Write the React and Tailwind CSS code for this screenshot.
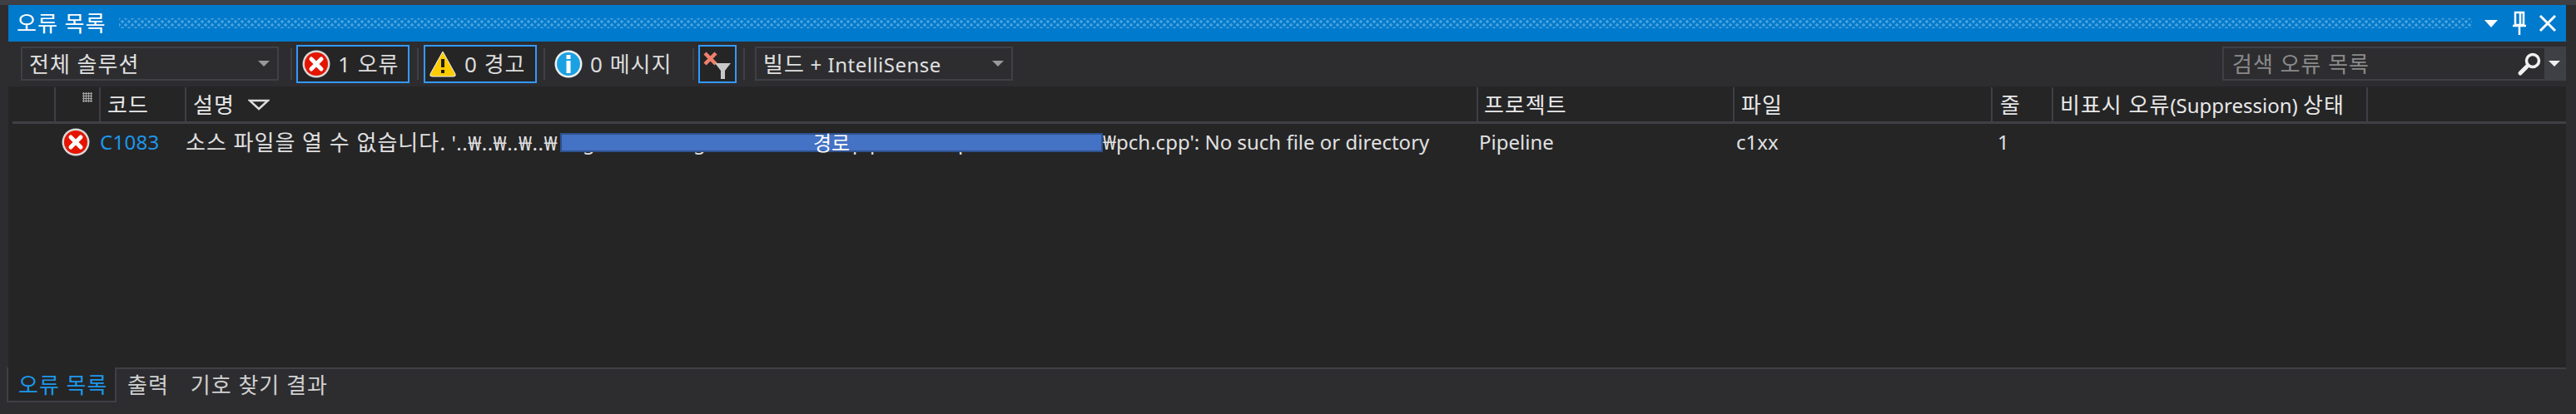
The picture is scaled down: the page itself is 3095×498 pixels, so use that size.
const FONT = "font-['Noto_Sans','Noto_Sans_CJK_KR',sans-serif]";

// hangul runs wider than the latin text in the original font
function Ko({ children }) {
  return <span className="text-[26px] tracking-[1px]">{children}</span>;
}

function ErrorIcon({ size = 34 }) {
  return (
    <svg viewBox="0 0 34 34" width={size} height={size} className="shrink-0">
      <circle cx="17" cy="17" r="16.500" fill="#d8d8d8" />
      <circle cx="17" cy="17" r="14" fill="#e51400" />
      <path d="M11 11L23 23M23 11L11 23" stroke="#fff" strokeWidth="5" strokeLinecap="round" />
    </svg>
  );
}

function WarningIcon() {
  return (
    <svg viewBox="0 0 34 34" width="34" height="34" className="shrink-0">
      <path d="M17 2L32 29Q33 32 30 32H4Q1 32 2 29Z" fill="#ffcc00" stroke="#f2f2f2" strokeWidth="1" />
      <path d="M17 11V21" stroke="#1e1e1e" strokeWidth="4" />
      <rect x="15" y="24" width="4" height="4" fill="#1e1e1e" />
    </svg>
  );
}

function InfoIcon() {
  return (
    <svg viewBox="0 0 34 34" width="34" height="34" className="shrink-0">
      <circle cx="17" cy="17" r="16.500" fill="#f0f0f0" />
      <circle cx="17" cy="17" r="14" fill="#1ba1e2" />
      <rect x="14.500" y="6" width="5" height="5" fill="#fff" />
      <rect x="14.500" y="13" width="5" height="15" fill="#fff" />
    </svg>
  );
}

function FilterIcon() {
  return (
    <svg viewBox="0 0 36 36" width="36" height="36">
      <path d="M3 5L16 18M16 5L3 18" stroke="#f0806c" strokeWidth="4.500" />
      <path d="M15 17H34L27 26V36H22V26Z" fill="#c8c8c8" />
    </svg>
  );
}

function Caret({ className = "" }) {
  return <span className={`w-0 h-0 border-x-[7px] border-x-transparent border-t-[7px] ${className}`} />;
}

function Combo({ children, className }) {
  return (
    <div className={`h-[41px] flex items-center justify-between pl-[8px] pr-[9px] bg-[#2d2d30] border-2 border-[#3f3f46] text-[#e0e0e0] ${className}`}>
      <span>{children}</span>
      <Caret className="border-t-[#999999]" />
    </div>
  );
}

function Sep({ className }) {
  return <div className={`w-[2px] h-[38px] bg-[#3f3f46] ${className}`} />;
}

function ToggleButton({ children, className }) {
  return (
    <div className={`h-[46px] flex items-center border-2 border-[#3399ff] bg-[#252526] ${className}`}>
      {children}
    </div>
  );
}

function HeaderCell({ children, className }) {
  return (
    <div className={`h-full flex items-center border-r-2 border-[#3f3f46] text-[#e8e8e8] ${className}`}>
      {children}
    </div>
  );
}

// bits of the masked path that stick out above and below the blue box
const PEEKS = [
  { w: "w-[27px]", t: "" },
  { w: "w-[118px]", t: "g" },
  { w: "w-[15px]", t: "l" },
  { w: "w-[191px]", t: "g" },
  { w: "w-[21px]", t: "p" },
  { w: "w-[26px]", t: "p" },
  { w: "w-[80px]", t: "l" },
  { w: "w-[20px]", t: "p" },
];

export default function App() {
  return (
    <div className={`w-[3095px] h-[498px] bg-[#2d2d30] flex flex-col overflow-hidden text-[24px] leading-none ${FONT}`}>
      <div className="h-[6px] bg-[#3f3f46] shrink-0" />

      {/* title bar */}
      <div className="h-[44px] ml-[10px] mr-[12px] bg-[#007acc] flex items-center pl-[10px] text-white shrink-0">
        <span className="w-[123px] whitespace-nowrap"><Ko>오류 목록</Ko></span>
        <div className="w-[2827px] h-[12px] bg-[radial-gradient(circle,#47a0dc_1.500px,transparent_2px),radial-gradient(circle,#47a0dc_1.500px,transparent_2px)] bg-size-[8px_8px] bg-position-[0_0,4px_4px]" />
        <Caret className="ml-[15px] border-x-[8px] border-t-[9px] border-t-white" />
        <svg viewBox="0 0 18 30" width="18" height="30" className="ml-[17px]" fill="none" stroke="#fff" strokeWidth="2.500">
          <path d="M4 2H14V17H4ZM10 3V16M1 18H17M9 18V29" />
        </svg>
        <svg viewBox="0 0 22 22" width="22" height="22" className="ml-[14px]" fill="none" stroke="#fff" strokeWidth="3">
          <path d="M2 2L20 20M20 2L2 20" />
        </svg>
      </div>

      {/* toolbar */}
      <div className="h-[50px] flex items-center pl-[25px] pr-[12px] pt-[3px] shrink-0">
        <Combo className="w-[310px]"><Ko>전체 솔루션</Ko></Combo>
        <Sep className="ml-[14px]" />
        <ToggleButton className="w-[136px] ml-[5px] pl-[5px] gap-[9px] text-[#dcdcdc]">
          <ErrorIcon />
          <Ko>1 오류</Ko>
        </ToggleButton>
        <Sep className="ml-[9px]" />
        <ToggleButton className="w-[136px] ml-[6px] pl-[4px] gap-[9px] text-[#dcdcdc]">
          <WarningIcon />
          <Ko>0 경고</Ko>
        </ToggleButton>
        <Sep className="ml-[8px]" />
        <div className="ml-[11px] w-[166px] flex items-center gap-[9px] text-[#dcdcdc]">
          <InfoIcon />
          <Ko>0 메시지</Ko>
        </div>
        <Sep />
        <ToggleButton className="w-[46px] ml-[5px] justify-center">
          <FilterIcon />
        </ToggleButton>
        <Sep className="ml-[8px]" />
        <Combo className="w-[310px] ml-[12px]"><Ko>빌드</Ko><span className="tracking-[0.5px]"> + IntelliSense</span></Combo>
        <div className="ml-auto w-[413px] h-[41px] flex border-2 border-[#3f3f46] bg-[#3f3f46]">
          <div className="flex-1 bg-[#2d2d30] flex items-center justify-between pl-[10px] pr-[3px] text-[#8a8a8a]">
            <Ko>검색 오류 목록</Ko>
            <svg viewBox="0 0 30 30" width="30" height="30" fill="none" stroke="#f0f0f0">
              <circle cx="19" cy="11" r="7.500" strokeWidth="3.500" />
              <path d="M13 17L4 26" strokeWidth="5" strokeLinecap="round" />
            </svg>
          </div>
          <div className="w-[24px] flex items-center justify-center">
            <Caret className="border-x-[6px] border-t-[6px] border-t-[#f0f0f0]" />
          </div>
        </div>
      </div>

      {/* table */}
      <div className="flex-1 ml-[10px] mr-[12px] bg-[#252526] flex flex-col min-h-0 border-b-2 border-[#3f3f46]">
        <div className="h-[4px] bg-[#2d2d30] shrink-0" />
        <div className="h-[42px] flex items-center shrink-0 pt-[1px] ml-[5px]">
          <div className="w-[52px] h-full border-r-2 border-[#3f3f46]" />
          <div className="w-[54px] h-full border-r-2 border-[#3f3f46] relative">
            <div className="absolute left-[32px] top-[6px] w-[12px] h-[12px] bg-[radial-gradient(circle,#a0a0a0_1px,transparent_1.500px)] bg-size-[3px_3px]" />
          </div>
          <HeaderCell className="w-[103px] pl-[8px]"><Ko>코드</Ko></HeaderCell>
          <HeaderCell className="w-[1552px] pl-[8px]">
            <Ko>설명</Ko>
            <svg viewBox="0 0 26 14" width="26" height="14" className="ml-[16px]" fill="none" stroke="#dcdcdc" strokeWidth="2.500">
              <path d="M2 2H24L13 12Z" />
            </svg>
          </HeaderCell>
          <HeaderCell className="w-[308px] pl-[7px]"><Ko>프로젝트</Ko></HeaderCell>
          <HeaderCell className="w-[310px] pl-[8px]"><Ko>파일</Ko></HeaderCell>
          <HeaderCell className="w-[73px] pl-[9px]"><Ko>줄</Ko></HeaderCell>
          <HeaderCell className="w-[378px] pl-[8px]">
            <span className="whitespace-nowrap"><Ko>비표시 오류</Ko>(Suppression) <Ko>상태</Ko></span>
          </HeaderCell>
        </div>
        <div className="h-[3px] bg-[#3f3f46] ml-[5px] shrink-0" />

        <div className="flex items-center h-[44px] ml-[5px] text-[#e0e0e0] shrink-0">
          <div className="w-[59px]" />
          <ErrorIcon />
          <span className="w-[115px] pl-[12px] text-[#1c97ea] tracking-[0.3px]">C1083</span>
          <div className="w-[1554px] flex items-center">
            <span className="w-[450px] whitespace-nowrap"><Ko>소스 파일을 열 수 없습니다.</Ko> <span className="tracking-[0.5px]">'..₩..₩..₩..₩</span></span>
            <span className="relative w-[652px] h-[30px] flex items-center">
              {PEEKS.map((p, i) => (
                <span key={i} className={`inline-block ${p.w}`}>{p.t}</span>
              ))}
              <span className="absolute left-0 top-[4px] w-[652px] h-[23px] bg-[#4472c4] border-2 border-[#2f528f] flex items-center justify-center text-white text-[24px]">경로</span>
            </span>
            <span className="whitespace-nowrap">₩pch.cpp': No such file or directory</span>
          </div>
          <span className="w-[309px]">Pipeline</span>
          <span className="w-[314px]">c1xx</span>
          <span>1</span>
        </div>
      </div>

      {/* bottom tabs */}
      <div className="h-[54px] flex shrink-0 text-[#d0d0d0] items-start">
        <div className="ml-[8px] w-[132px] h-[42px] bg-[#252526] border-x-2 border-b-2 border-[#3f3f46] -mt-[2px] pt-[8px] pl-[12px] text-[#1c97ea] whitespace-nowrap"><Ko>오류 목록</Ko></div>
        <span className="ml-[13px] pt-[6px]"><Ko>출력</Ko></span>
        <span className="ml-[26px] pt-[6px]"><Ko>기호 찾기 결과</Ko></span>
      </div>
    </div>
  );
}
